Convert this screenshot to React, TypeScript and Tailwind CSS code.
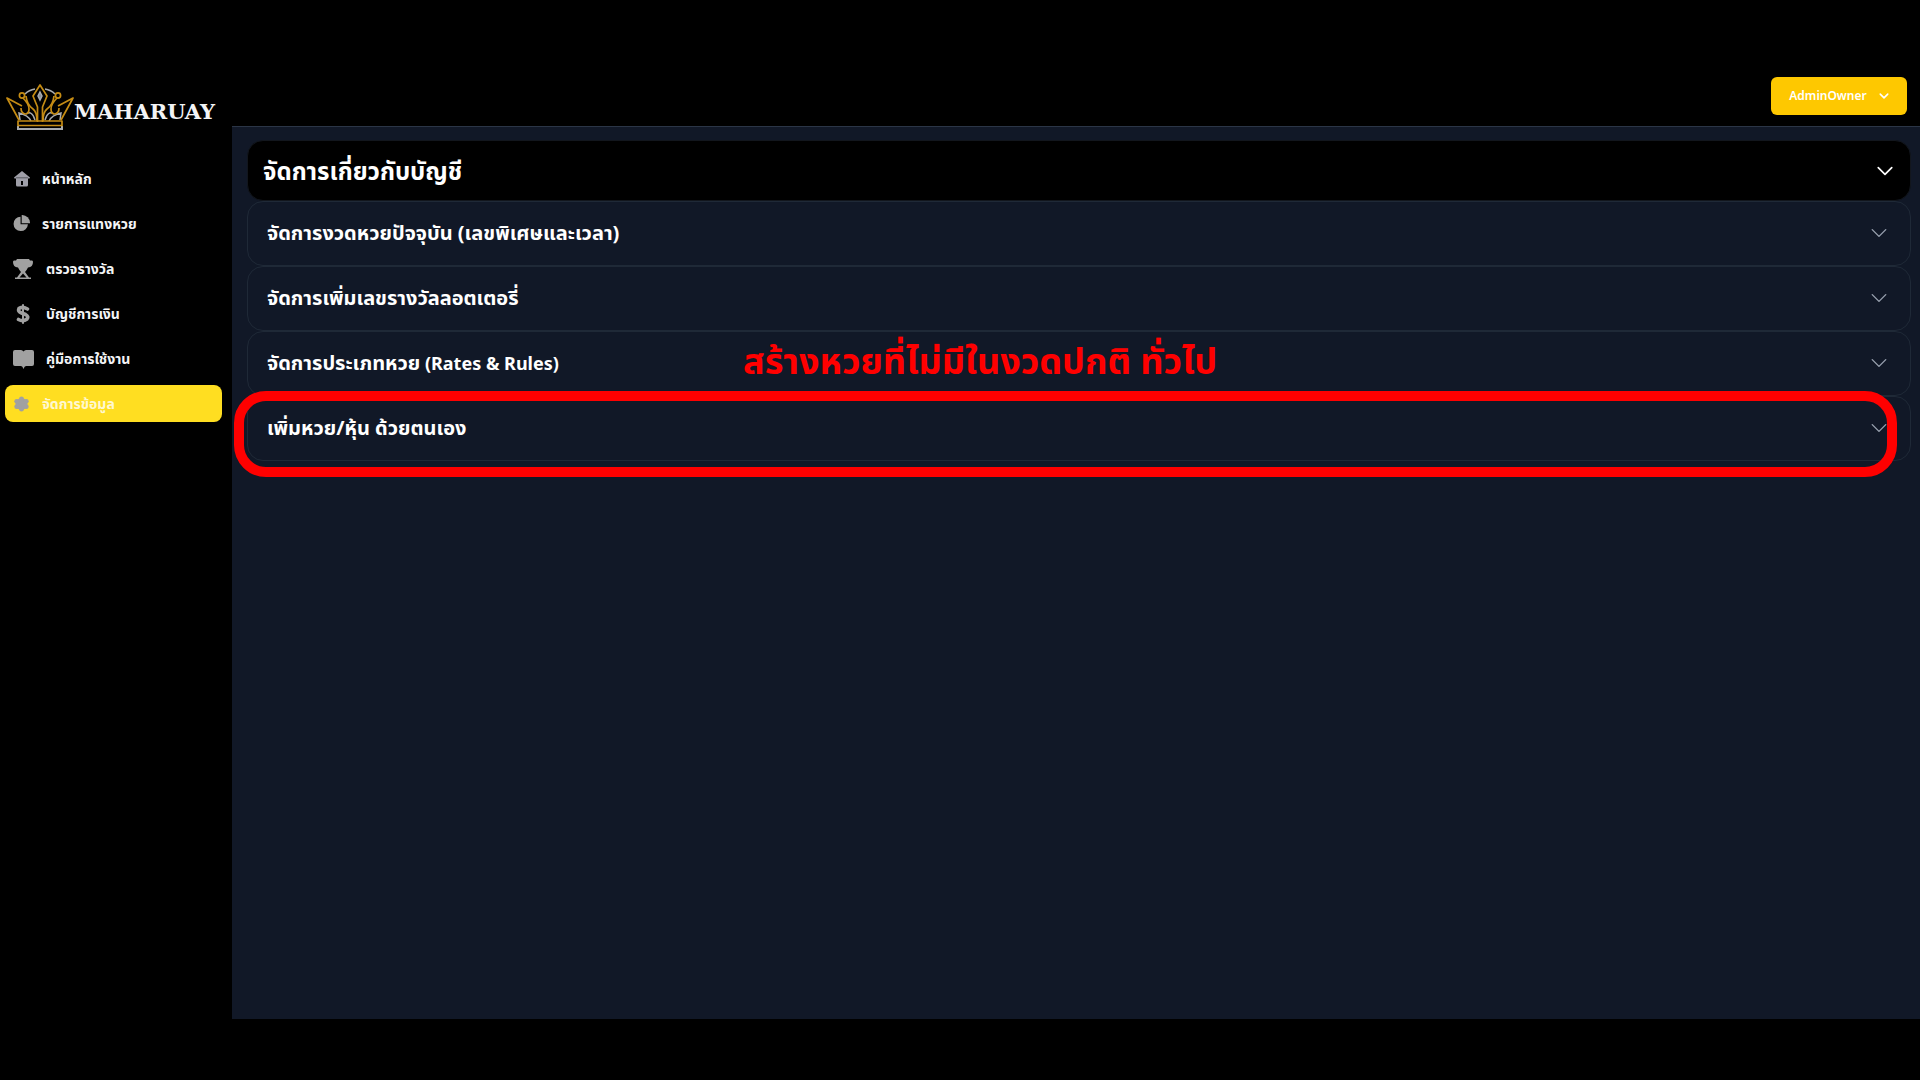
import type { ReactNode } from "react";

const thai = "font-['Noto_Sans','Noto_Sans_Thai',sans-serif]";

function Chevron({ className }: { className: string }) {
  return (
    <svg viewBox="0 0 16 16" className={className} fill="none" stroke="currentColor" strokeLinecap="round" strokeLinejoin="round" aria-hidden="true">
      <path d="M2 5l6 6 6-6" />
    </svg>
  );
}

function Crown() {
  return (
    <svg viewBox="0 0 68 47" className="h-[47px] w-[68px] shrink-0" fill="none" aria-hidden="true">
      <g stroke="#a9acb0" strokeWidth="1.500">
        <path d="M19 10q4-4 10-5M49 10q-4-4-10-5" />
        <path d="M14 36l-1-7q9 2 12 8M54 36l1-7q-9 2-12 8" />
        <path d="M20 30q6-4 9 6M48 30q-6-4-9 6" />
        <path fill="#8d9095" d="M34 8l2 4-2 4-2-4z" />
        <path strokeWidth="2" d="M12 42v3h44v-3" />
      </g>
      <g stroke="#c58c14" strokeWidth="1.700" strokeLinejoin="round">
        <path d="M13 36L1 14l15 8M55 36L67 14l-15 8" />
        <circle cx="16" cy="11.500" r="2.600" />
        <circle cx="52" cy="11.500" r="2.600" />
        <path d="M20 12q1 9 7 13 4 3 4 12M48 12q-1 9-7 13-4 3-4 12" />
        <path d="M17 14q6 6 6 11 0 5-4 5-4-1-4-6M51 14q-6 6-6 11 0 5 4 5 4-1 4-6" />
        <path d="M31.500 38V23L27 12l7-11 7 11-4.500 11v15" />
        <path d="M12 37h44v4.500H12z" />
      </g>
    </svg>
  );
}

type Item = { label: string; icon: ReactNode; active?: boolean };

const items: Item[] = [
  {
    label: "หน้าหลัก",
    icon: (
      <svg viewBox="0 0 17 16" className="h-4 w-[17px]" aria-hidden="true">
        <path fill="#9f9fa8" d="M9 0l8 6.500-.5 1H15V14q0 1.500-1.500 1.500h-9Q3 15.500 3 14V7.500H1.500L1 6.500zM8 10v4h2v-4z" fillRule="evenodd" />
        <path stroke="#25272e" strokeWidth=".6" d="M3 6.800h12" />
      </svg>
    ),
  },
  {
    label: "รายการแทงหวย",
    icon: (
      <svg viewBox="0 0 18 18" className="h-[17px] w-[17px]" fill="#a1a1a1" aria-hidden="true">
        <path d="M8 1.800V9.800H15.800A7.600 7.600 0 1 1 8 1.800z" />
        <path d="M9.200 0a8.500 8.500 0 0 1 8.800 8.700H9.200z" />
      </svg>
    ),
  },
  {
    label: "ตรวจรางวัล",
    icon: (
      <svg viewBox="0 0 21 20" className="h-5 w-[21px]" fill="#a1a1a1" aria-hidden="true">
        <path d="M4 0h12l1 1.500h2q1 0 1 1.500 0 5-5 5.500-1.500 3-3 4.500l4 5.500h2V20H2v-1.500h2L8 13Q6.500 11.500 5 8.500 0 8 0 3q0-1.500 1-1.500h2zM10 14.500l-3.500 4h7z" fillRule="evenodd" />
      </svg>
    ),
  },
  {
    label: "บัญชีการเงิน",
    icon: (
      <svg viewBox="0 0 21 20" className="h-5 w-[21px]" fill="none" stroke="#a1a1a1" strokeLinecap="round" aria-hidden="true">
        <path strokeWidth="3.600" d="M14.500 5Q9 2 6 4.500q-1.500 3 2.500 4.500l4 1.500q3.500 2 1.500 4.500Q10 18 5.500 15.500" />
        <path strokeWidth="2" d="M10 1v18" />
      </svg>
    ),
  },
  {
    label: "คู่มือการใช้งาน",
    icon: (
      <svg viewBox="0 0 21 20" className="h-5 w-[21px]" fill="#a1a1a1" aria-hidden="true">
        <path d="M2 1h6q1.500 0 2.500 1.500Q11.500 1 13 1h6q2 0 2 2v12q0 2-2 2h-6q-1.500 0-2.500 3Q9.500 17 8 17H2q-2 0-2-2V3q0-2 2-2z" />
      </svg>
    ),
  },
  {
    label: "จัดการข้อมูล",
    active: true,
    icon: (
      <svg viewBox="0 0 17 16" className="h-4 w-[17px]" fill="#a1a1a1" aria-hidden="true">
        <circle cx="8.500" cy="8" r="6" />
        <circle cx="8.500" cy="2.800" r="2.400" />
        <circle cx="8.500" cy="13.200" r="2.400" />
        <circle cx="3.700" cy="5.300" r="2.400" />
        <circle cx="13.300" cy="5.300" r="2.400" />
        <circle cx="3.700" cy="10.700" r="2.400" />
        <circle cx="13.300" cy="10.700" r="2.400" />
      </svg>
    ),
  },
];

const sections = [
  { label: "จัดการงวดหวยปัจจุบัน (เลขพิเศษและเวลา)" },
  { label: "จัดการเพิ่มเลขรางวัลลอตเตอรี่" },
  { label: "จัดการประเภทหวย", latin: "(Rates & Rules)" },
  { label: "เพิ่มหวย/หุ้น ด้วยตนเอง" },
];

export default function App() {
  return (
    <div className={`flex min-h-screen bg-black pt-[62px] pb-[61px] font-bold text-white ${thai}`}>
      <aside className="w-[232px] shrink-0">
        <a href="#" className="flex items-center pt-[22px] pl-1.5">
          <Crown />
          <span className="mt-2 font-['DejaVu_Serif',serif] text-[21px] leading-7 text-gray-100">MAHARUAY</span>
        </a>
        <nav className="mt-[29px] mr-2.5 flex flex-col gap-2 pl-[5px]">
          {items.map((it) => (
            <a
              key={it.label}
              href="#"
              className={`flex h-[37px] items-center gap-3 rounded-lg pl-2 text-sm ${it.active ? "bg-[#ffde21] text-[#fff8d0]" : "text-gray-100"}`}
            >
              {it.icon}
              {it.label}
            </a>
          ))}
        </nav>
      </aside>

      <div className="flex min-w-0 flex-1 flex-col">
        <header className="flex h-[65px] items-start justify-end border-b border-[#2b3546] bg-black pt-[15px] pr-[13px]">
          <button className="flex h-[38px] w-[136px] items-center justify-center gap-3 rounded-md bg-[#fec800] font-['Noto_Sans',sans-serif] text-xs font-semibold text-white">
            AdminOwner
            <Chevron className="size-2.5 stroke-[2.5px]" />
          </button>
        </header>

        <main className="flex-1 bg-[#111827] pt-[13px] pr-[9px] pl-[15px]">
          <button className="flex h-[61px] w-full items-center justify-between rounded-2xl border border-[#12161d] bg-black pr-4 pl-[15px] text-2xl">
            จัดการเกี่ยวกับบัญชี
            <Chevron className="size-4.5 stroke-[1.5px]" />
          </button>
          {sections.map(({ label, latin }, i) => (
            <section key={label} className="relative">
              <button className="flex h-[65px] w-full items-center justify-between rounded-2xl border border-[#1f2937] pr-[22px] pb-px pl-[19px] text-xl">
                <span>
                  {label}
                  {latin && <span className="text-lg"> {latin}</span>}
                </span>
                <Chevron className="size-4.5 stroke-[1.25px] text-gray-400" />
              </button>
              {i === 2 && (
                <p className="absolute top-1 left-[496px] text-[36px] leading-[52px] whitespace-nowrap text-[#ff0000]">
                  สร้างหวยที่ไม่มีในงวดปกติ ทั่วไป
                </p>
              )}
              {i === 3 && (
                <div className="pointer-events-none absolute -top-[5px] right-3.5 -bottom-4 -left-[13px] rounded-[32px] border-10 border-[#ff0000]" />
              )}
            </section>
          ))}
        </main>
      </div>
    </div>
  );
}
